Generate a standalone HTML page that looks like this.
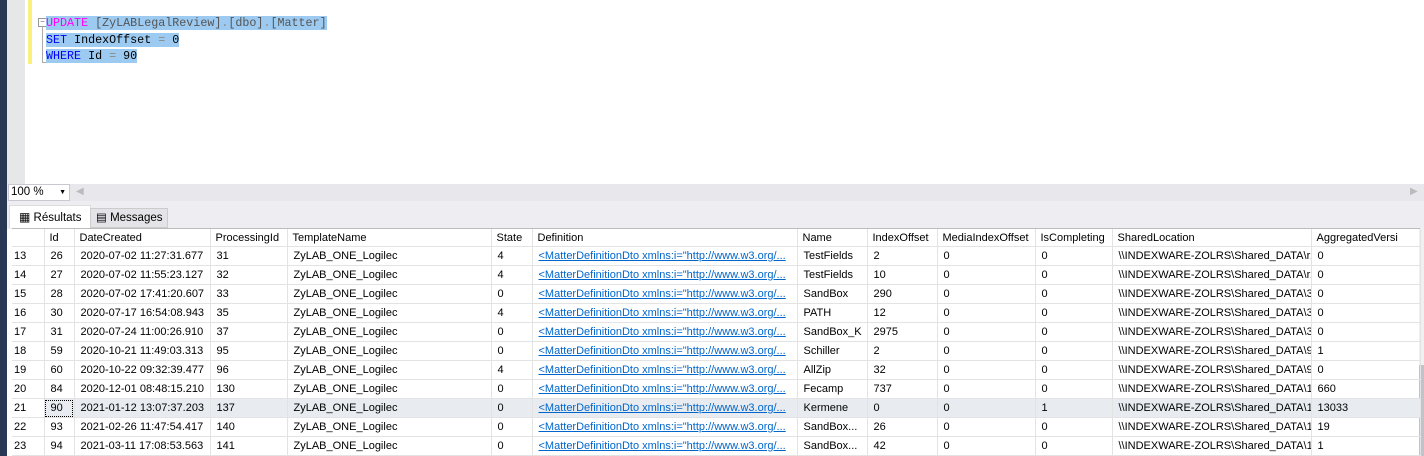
<!DOCTYPE html>
<html><head><meta charset="utf-8"><style>
body{margin:0;width:1424px;height:456px;overflow:hidden;background:#fff;position:relative;font-family:"Liberation Sans",sans-serif;}
.a{position:absolute}
.code{font-family:"Liberation Mono",monospace;font-size:11.7px;line-height:16.5px;white-space:pre}
.sel{background:#9ccaf0}
table{border-collapse:collapse;table-layout:fixed;font-size:11px;color:#000}
td{height:18px;padding:0 0 0 6px;border-right:1px solid #e3e3e3;border-bottom:1px solid #e3e3e3;white-space:nowrap;overflow:hidden}
tr.h td{height:17px;padding-left:5px}
td.r{padding-left:2px}
.l{color:#0066cc;text-decoration:underline}
tr.s td{background:#e8ecf0}
</style></head><body>
<div class="a" style="left:0;top:0;width:7px;height:456px;background:#293955"></div>
<div class="a" style="left:7px;top:0;width:18px;height:184px;background:#e6e7e8"></div>
<div class="a" style="left:28px;top:0;width:4px;height:64px;background:#fbef7e"></div>
<div class="a" style="left:38px;top:18px;width:7px;height:7px;border:1px solid #999;font-size:8px;line-height:6px;text-align:center;color:#666">−</div>
<div class="a" style="left:42px;top:27px;width:1px;height:35px;background:#aaa"></div>
<div class="a" style="left:42px;top:62px;width:4px;height:1px;background:#aaa"></div>
<div class="a code" style="left:46px;top:15px"><span class="sel"><span style="color:#ff00ff">UPDATE</span> <span style="color:#555">[ZyLABLegalReview]</span><span style="color:#888">.</span><span style="color:#555">[dbo]</span><span style="color:#888">.</span><span style="color:#555">[Matter]</span></span>
<span class="sel"><span style="color:#0000ff">SET</span> IndexOffset <span style="color:#888">=</span> 0</span>
<span class="sel"><span style="color:#0000ff">WHERE</span> Id <span style="color:#888">=</span> 90</span></div>
<div class="a" style="left:7px;top:184px;width:1417px;height:17px;background:#e8e8ec"></div>
<div class="a" style="left:8px;top:184px;width:58px;height:15px;background:#fff;border:1px solid #c8c8d0;font-size:11.5px;line-height:15px;padding-left:2px">100 %<span style="position:absolute;right:3px;top:0;font-size:7px">▼</span></div>
<div class="a" style="left:76px;top:186px;color:#bbb;font-size:10px">◀</div>
<div class="a" style="left:1410px;top:186px;color:#bbb;font-size:10px">▶</div>
<div class="a" style="left:7px;top:201px;width:1417px;height:28px;background:#eeeef2"></div>
<div class="a" style="left:9px;top:205px;width:80px;height:22px;background:#fff;border:1px solid #ddd;border-bottom:none;font-size:11.5px;line-height:22px"><span style="margin-left:9px;font-size:12px">▦</span> <span>Résultats</span></div>
<div class="a" style="left:90px;top:208px;width:76px;height:18px;background:#e4e4e8;border:1px solid #ccc;font-size:11.5px;line-height:18px"><span style="margin-left:5px">▤</span> Messages</div>
<div class="a" style="left:12px;top:228px;width:1408px;height:1px;background:#bbb"></div>
<div class="a" style="left:1419px;top:229px;width:5px;height:227px;background:#f0f0f0"></div>
<div class="a" style="left:1419px;top:365px;width:5px;height:91px;background:#c2c3c9"></div>
<table class="a" style="left:12px;top:229px;width:1408px">
<colgroup><col style="width:32px"><col style="width:30px"><col style="width:136px"><col style="width:77px"><col style="width:204px"><col style="width:41px"><col style="width:265px"><col style="width:70px"><col style="width:70px"><col style="width:98px"><col style="width:77px"><col style="width:199px"><col style="width:109px"></colgroup>
<tr class="h"><td></td><td>Id</td><td>DateCreated</td><td>ProcessingId</td><td>TemplateName</td><td>State</td><td>Definition</td><td>Name</td><td>IndexOffset</td><td>MediaIndexOffset</td><td>IsCompleting</td><td>SharedLocation</td><td>AggregatedVersi</td></tr>
<tr><td class="r">13</td><td>26</td><td>2020-07-02 11:27:31.677</td><td>31</td><td>ZyLAB_ONE_Logilec</td><td>4</td><td class="l">&lt;MatterDefinitionDto xmlns:i="http://www.w3.org/...</td><td>TestFields</td><td>2</td><td>0</td><td>0</td><td>\\INDEXWARE-ZOLRS\Shared_DATA\r26</td><td>0</td></tr>
<tr><td class="r">14</td><td>27</td><td>2020-07-02 11:55:23.127</td><td>32</td><td>ZyLAB_ONE_Logilec</td><td>4</td><td class="l">&lt;MatterDefinitionDto xmlns:i="http://www.w3.org/...</td><td>TestFields</td><td>10</td><td>0</td><td>0</td><td>\\INDEXWARE-ZOLRS\Shared_DATA\r27</td><td>0</td></tr>
<tr><td class="r">15</td><td>28</td><td>2020-07-02 17:41:20.607</td><td>33</td><td>ZyLAB_ONE_Logilec</td><td>0</td><td class="l">&lt;MatterDefinitionDto xmlns:i="http://www.w3.org/...</td><td>SandBox</td><td>290</td><td>0</td><td>0</td><td>\\INDEXWARE-ZOLRS\Shared_DATA\33</td><td>0</td></tr>
<tr><td class="r">16</td><td>30</td><td>2020-07-17 16:54:08.943</td><td>35</td><td>ZyLAB_ONE_Logilec</td><td>4</td><td class="l">&lt;MatterDefinitionDto xmlns:i="http://www.w3.org/...</td><td>PATH</td><td>12</td><td>0</td><td>0</td><td>\\INDEXWARE-ZOLRS\Shared_DATA\35</td><td>0</td></tr>
<tr><td class="r">17</td><td>31</td><td>2020-07-24 11:00:26.910</td><td>37</td><td>ZyLAB_ONE_Logilec</td><td>0</td><td class="l">&lt;MatterDefinitionDto xmlns:i="http://www.w3.org/...</td><td>SandBox_K</td><td>2975</td><td>0</td><td>0</td><td>\\INDEXWARE-ZOLRS\Shared_DATA\37</td><td>0</td></tr>
<tr><td class="r">18</td><td>59</td><td>2020-10-21 11:49:03.313</td><td>95</td><td>ZyLAB_ONE_Logilec</td><td>0</td><td class="l">&lt;MatterDefinitionDto xmlns:i="http://www.w3.org/...</td><td>Schiller</td><td>2</td><td>0</td><td>0</td><td>\\INDEXWARE-ZOLRS\Shared_DATA\95</td><td>1</td></tr>
<tr><td class="r">19</td><td>60</td><td>2020-10-22 09:32:39.477</td><td>96</td><td>ZyLAB_ONE_Logilec</td><td>4</td><td class="l">&lt;MatterDefinitionDto xmlns:i="http://www.w3.org/...</td><td>AllZip</td><td>32</td><td>0</td><td>0</td><td>\\INDEXWARE-ZOLRS\Shared_DATA\96</td><td>0</td></tr>
<tr><td class="r">20</td><td>84</td><td>2020-12-01 08:48:15.210</td><td>130</td><td>ZyLAB_ONE_Logilec</td><td>0</td><td class="l">&lt;MatterDefinitionDto xmlns:i="http://www.w3.org/...</td><td>Fecamp</td><td>737</td><td>0</td><td>0</td><td>\\INDEXWARE-ZOLRS\Shared_DATA\1...</td><td>660</td></tr>
<tr class="s"><td class="r" style="background:#fff">21</td><td style="outline:1px dotted #000;outline-offset:-2px">90</td><td>2021-01-12 13:07:37.203</td><td>137</td><td>ZyLAB_ONE_Logilec</td><td>0</td><td class="l">&lt;MatterDefinitionDto xmlns:i="http://www.w3.org/...</td><td>Kermene</td><td>0</td><td>0</td><td>1</td><td>\\INDEXWARE-ZOLRS\Shared_DATA\1...</td><td>13033</td></tr>
<tr><td class="r">22</td><td>93</td><td>2021-02-26 11:47:54.417</td><td>140</td><td>ZyLAB_ONE_Logilec</td><td>0</td><td class="l">&lt;MatterDefinitionDto xmlns:i="http://www.w3.org/...</td><td>SandBox...</td><td>26</td><td>0</td><td>0</td><td>\\INDEXWARE-ZOLRS\Shared_DATA\1...</td><td>19</td></tr>
<tr><td class="r">23</td><td>94</td><td>2021-03-11 17:08:53.563</td><td>141</td><td>ZyLAB_ONE_Logilec</td><td>0</td><td class="l">&lt;MatterDefinitionDto xmlns:i="http://www.w3.org/...</td><td>SandBox...</td><td>42</td><td>0</td><td>0</td><td>\\INDEXWARE-ZOLRS\Shared_DATA\1...</td><td>1</td></tr>
</table>
</body></html>
